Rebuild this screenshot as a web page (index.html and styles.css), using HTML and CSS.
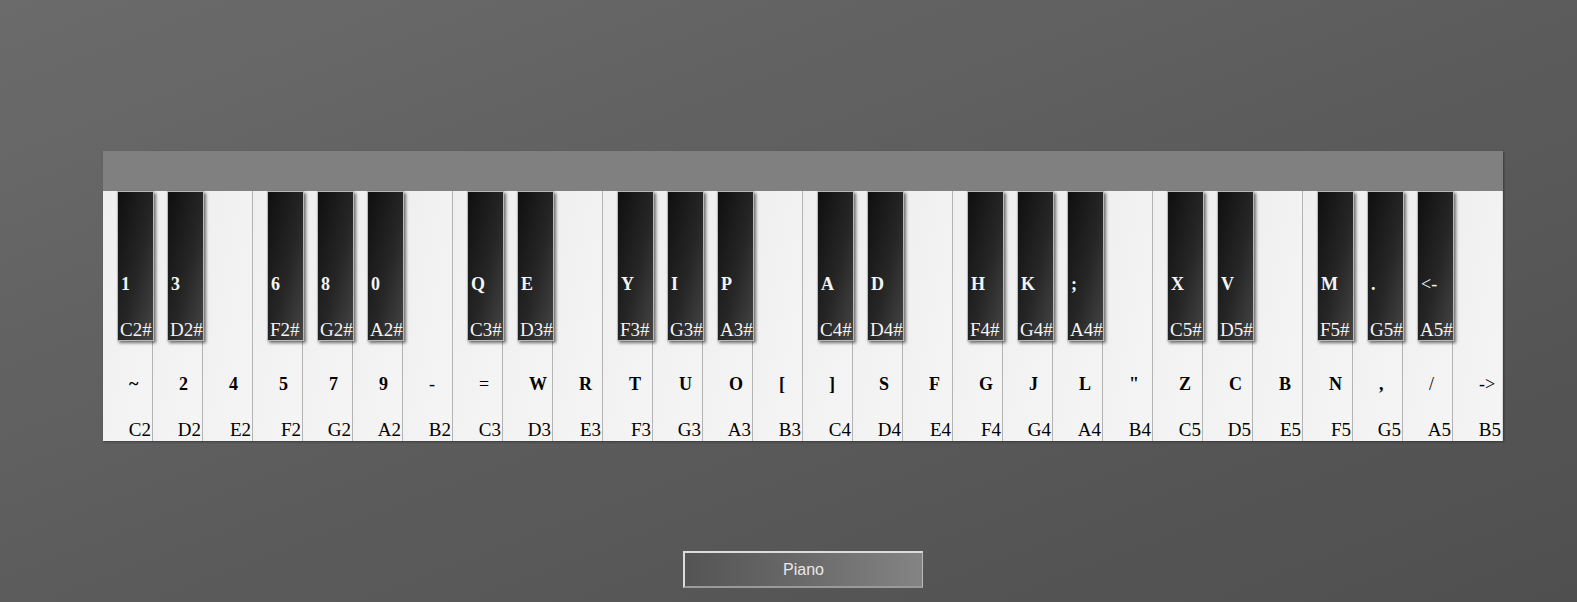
FILE: index.html
```html
<!DOCTYPE html>
<html>
<head>
<meta charset="utf-8">
<title>Piano</title>
<link rel="stylesheet" href="styles.css">
</head>
<body>
<div class="stage">
  <div class="piano">
    <div class="bar"></div>
    <div class="keys">
      <div class="white"><div class="black"><span class="k">1</span><span class="n">C2#</span></div><span class="k">~</span><span class="n">C2</span></div>
      <div class="white"><div class="black"><span class="k">3</span><span class="n">D2#</span></div><span class="k">2</span><span class="n">D2</span></div>
      <div class="white"><span class="k">4</span><span class="n">E2</span></div>
      <div class="white"><div class="black"><span class="k">6</span><span class="n">F2#</span></div><span class="k">5</span><span class="n">F2</span></div>
      <div class="white"><div class="black"><span class="k">8</span><span class="n">G2#</span></div><span class="k">7</span><span class="n">G2</span></div>
      <div class="white"><div class="black"><span class="k">0</span><span class="n">A2#</span></div><span class="k">9</span><span class="n">A2</span></div>
      <div class="white"><span class="k thin">-</span><span class="n">B2</span></div>
      <div class="white"><div class="black"><span class="k">Q</span><span class="n">C3#</span></div><span class="k thin">=</span><span class="n">C3</span></div>
      <div class="white"><div class="black"><span class="k">E</span><span class="n">D3#</span></div><span class="k">W</span><span class="n">D3</span></div>
      <div class="white"><span class="k">R</span><span class="n">E3</span></div>
      <div class="white"><div class="black"><span class="k">Y</span><span class="n">F3#</span></div><span class="k">T</span><span class="n">F3</span></div>
      <div class="white"><div class="black"><span class="k">I</span><span class="n">G3#</span></div><span class="k">U</span><span class="n">G3</span></div>
      <div class="white"><div class="black"><span class="k">P</span><span class="n">A3#</span></div><span class="k">O</span><span class="n">A3</span></div>
      <div class="white"><span class="k">[</span><span class="n">B3</span></div>
      <div class="white"><div class="black"><span class="k">A</span><span class="n">C4#</span></div><span class="k">]</span><span class="n">C4</span></div>
      <div class="white"><div class="black"><span class="k">D</span><span class="n">D4#</span></div><span class="k">S</span><span class="n">D4</span></div>
      <div class="white"><span class="k">F</span><span class="n">E4</span></div>
      <div class="white"><div class="black"><span class="k">H</span><span class="n">F4#</span></div><span class="k">G</span><span class="n">F4</span></div>
      <div class="white"><div class="black"><span class="k">K</span><span class="n">G4#</span></div><span class="k">J</span><span class="n">G4</span></div>
      <div class="white"><div class="black"><span class="k">;</span><span class="n">A4#</span></div><span class="k">L</span><span class="n">A4</span></div>
      <div class="white"><span class="k">"</span><span class="n">B4</span></div>
      <div class="white"><div class="black"><span class="k">X</span><span class="n">C5#</span></div><span class="k">Z</span><span class="n">C5</span></div>
      <div class="white"><div class="black"><span class="k">V</span><span class="n">D5#</span></div><span class="k">C</span><span class="n">D5</span></div>
      <div class="white"><span class="k">B</span><span class="n">E5</span></div>
      <div class="white"><div class="black"><span class="k">M</span><span class="n">F5#</span></div><span class="k">N</span><span class="n">F5</span></div>
      <div class="white"><div class="black"><span class="k">.</span><span class="n">G5#</span></div><span class="k">,</span><span class="n">G5</span></div>
      <div class="white"><div class="black"><span class="k thin">&lt;-</span><span class="n">A5#</span></div><span class="k thin">/</span><span class="n">A5</span></div>
      <div class="white"><span class="k thin">-&gt;</span><span class="n">B5</span></div>
    </div>
  </div>
  <div class="controls">
    <button class="btn">Piano</button>
  </div>
</div>
</body>
</html>
```

FILE: styles.css
```css
html, body {
  margin: 0;
  padding: 0;
}

body {
  width: 1577px;
  height: 602px;
  overflow: hidden;
  background: linear-gradient(to bottom right, #6b6b6b 0%, #5c5c5c 50%, #4f4f4f 100%);
  font-family: "Liberation Serif", "Times New Roman", serif;
}

.stage {
  width: 1400px;
  margin-left: 103px;
  padding-top: 151px;
  display: flex;
  flex-direction: column;
}

.piano {
  display: flex;
  flex-direction: column;
  box-shadow: 1px 1px 2px rgba(0, 0, 0, 0.35);
}

.bar {
  height: 40px;
  background: #808080;
}

.keys {
  display: flex;
  height: 250px;
}

.white {
  position: relative;
  box-sizing: border-box;
  width: 50px;
  height: 250px;
  border-right: 1px solid #b3b3b3;
  background: linear-gradient(to bottom right, #efefef, #f5f5f5);
  display: flex;
  flex-direction: column;
  justify-content: flex-end;
  padding-bottom: 1px;
  color: #000;
}

.white:last-child {
  border-right: 1px solid #d8d8d8;
}

.white > .k {
  padding-left: 26px;
}

.white > .n {
  text-align: right;
  padding-right: 1px;
}

.k {
  display: block;
  font-size: 18px;
  font-weight: bold;
  line-height: 20px;
  margin-bottom: 26px;
  white-space: nowrap;
}

.k.thin {
  font-weight: normal;
}

.n {
  display: block;
  font-size: 19px;
  line-height: 20px;
  white-space: nowrap;
}

.black {
  position: absolute;
  z-index: 1;
  left: 14px;
  top: 0;
  box-sizing: border-box;
  width: 37px;
  height: 150px;
  border: 1px solid #b8b8b8;
  background: linear-gradient(to bottom right, #0f0f0f 0%, #262626 55%, #454545 100%);
  box-shadow: 2px 2px 3px rgba(0, 0, 0, 0.55);
  display: flex;
  flex-direction: column;
  justify-content: flex-end;
  align-items: flex-start;
  padding: 0 0 0 2px;
  color: #f4f4f4;
  overflow: hidden;
}

.black > .k {
  padding-left: 1px;
}

.controls {
  display: flex;
  justify-content: center;
  padding-top: 110px;
}

.btn {
  box-sizing: border-box;
  width: 240px;
  height: 37px;
  margin: 0;
  padding: 0;
  border-style: solid;
  border-width: 2px 1px 2px 2px;
  border-color: #dcdcdc #b8b8b8 #9a9a9a #dcdcdc;
  background: linear-gradient(to right, #545454, #6a6a6a 50%, #848484);
  color: #e8e8e8;
  font-family: "Liberation Sans", Arial, sans-serif;
  font-size: 16px;
}
```
